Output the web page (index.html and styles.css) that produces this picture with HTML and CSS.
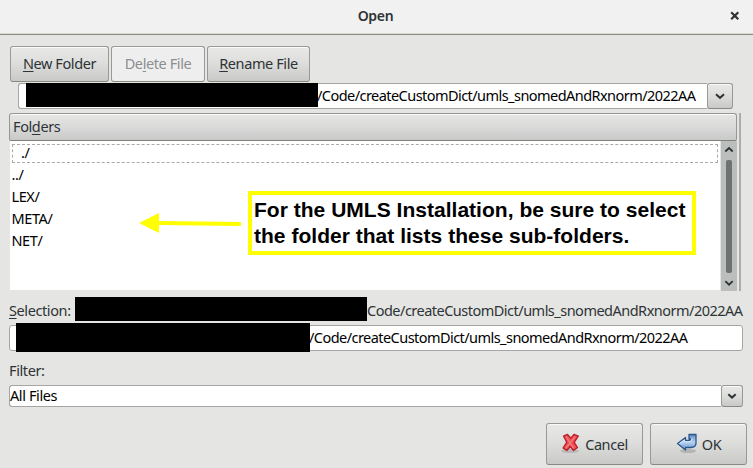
FILE: index.html
```html
<!DOCTYPE html>
<html lang="en">
<head>
<meta charset="utf-8">
<title>Open</title>
<link rel="stylesheet" href="styles.css">
</head>
<body>
<div class="dialog">
  <header class="titlebar">
    <h1>Open</h1>
    <svg class="close" width="10" height="10" viewBox="0 0 10 10"><path d="M1.2 1.2 8.3 8.3M8.3 1.2 1.2 8.3" stroke="#2e3436" stroke-width="2.2"/></svg>
  </header>
  <main>
    <div class="toolbar">
      <button class="btn new"><span><u>N</u>ew Folder</span></button>
      <button class="btn delete" disabled><span>De<u>l</u>ete File</span></button>
      <button class="btn rename"><span><u>R</u>ename File</span></button>
    </div>
    <div class="path combo">
      <div class="field"><span class="redacted"></span><span class="value">/Code/createCustomDict/umls_snomedAndRxnorm/2022AA</span></div>
      <button class="btn drop"><svg width="10" height="7" viewBox="0 0 10 7"><path d="M1 1.2 5 4.8 9 1.2" fill="none" stroke="#2e3436" stroke-width="2"/></svg></button>
    </div>
    <section class="folders">
      <div class="list-side">
        <div class="list-head"><span>Fol<u>d</u>ers</span></div>
        <div class="list-body">
          <ul>
            <li class="current">./</li>
            <li>../</li>
            <li>LEX/</li>
            <li>META/</li>
            <li>NET/</li>
          </ul>
          <div class="scrollbar">
            <svg width="10" height="7" viewBox="0 0 10 7"><path d="M1.3 5.5 5 2 8.7 5.5" fill="none" stroke="#2e3436" stroke-width="1.8"/></svg>
            <i class="thumb"></i>
            <svg width="10" height="7" viewBox="0 0 10 7"><path d="M1.3 1.2 5 4.7 8.7 1.2" fill="none" stroke="#2e3436" stroke-width="1.8"/></svg>
          </div>
        </div>
      </div>
      <div class="callout">
        <svg width="102" height="20" viewBox="0 0 102 20"><path d="M0 10 20 0V8L102 9V13L20 12V20Z" fill="#ff0"/></svg>
        <p><span class="line1">For the UMLS Installation, be sure to select</span><br><span class="line2">the folder that lists these sub-folders.</span></p>
      </div>
    </section>
    <div class="selection"><span class="label"><u>S</u>election:</span><span class="redacted"></span><span class="value">Code/createCustomDict/umls_snomedAndRxnorm/2022AA</span></div>
    <div class="field entry"><span class="redacted"></span><span class="value">/Code/createCustomDict/umls_snomedAndRxnorm/2022AA</span></div>
    <div class="filter-label">Filter:</div>
    <div class="combo filter">
      <div class="field"><span>All Files</span></div>
      <button class="btn drop"><svg width="10" height="7" viewBox="0 0 10 7"><path d="M1.3 1.2 5 4.6 8.7 1.2" fill="none" stroke="#2e3436" stroke-width="2"/></svg></button>
    </div>
    <footer>
      <button class="btn cancel">
        <svg width="20" height="21" viewBox="0 0 20 21"><ellipse cx="9" cy="18" rx="9" ry="2" fill="#888" opacity=".35"/><path d="M2.5 3 6.5 1.3 9.8 5.2 13 1.3 17.3 3.2 13.2 9.3 16.5 14.5 12.5 17.5 9.3 13.5 5.8 17.5 2 15 5.7 9.3Z" fill="#ef4f55" stroke="#b51f2a" stroke-width="1.3" stroke-linejoin="round"/><path d="M5 3.6 12.7 15.3M14.2 3.6 5 15" stroke="#f77b7d" stroke-width="1.3"/></svg>
        <span>Cancel</span>
      </button>
      <button class="btn ok">
        <svg width="22" height="21" viewBox="0 0 22 21"><defs><linearGradient id="g" x2="0" y2="1"><stop stop-color="#5b8ac4"/><stop offset=".5" stop-color="#b7d2ee"/><stop offset="1" stop-color="#5e94d2"/></linearGradient></defs><ellipse cx="12" cy="18" rx="8" ry="2" fill="#777" opacity=".35"/><path d="M1.5 10.5 9.5 4.5V7.5H12.5Q15 7.5 15 6H13V1.5H20V10Q20 14.5 15 14.5H9.5V17Z" fill="url(#g)" stroke="#2d568b" stroke-width="1.3" stroke-linejoin="round"/><path d="M3.7 10.5 8.4 7V8.7H13Q16.2 8.5 16.2 5" fill="none" stroke="#dceafa"/></svg>
        <span>OK</span>
      </button>
    </footer>
  </main>
</div>
</body>
</html>
```
FILE: styles.css
```css
* { box-sizing: border-box; }
body {
  margin: 0;
  background: #e5e5e3;
  color: #2e3436;
  font: 14.5px/22px "Noto Sans", sans-serif;
  letter-spacing: -0.4px;
}
.dialog { width: 753px; height: 468px; overflow: hidden; }
.titlebar {
  position: relative;
  height: 35px;
  display: flex;
  align-items: center;
  justify-content: center;
  padding-bottom: 3px;
  background: #f1f1f1;
  border-bottom: 1px solid #8c8d82;
  box-shadow: inset 0 -1px #d8d9d3;
}
h1 { margin: 0 2px 0 0; font-size: 14px; line-height: 22px; font-weight: 600; letter-spacing: -.3px; }
.close { position: absolute; right: 13px; top: 11px; }
main { padding: 11px 6px 0 9px; }
u { text-decoration: underline; text-decoration-thickness: 1px; text-underline-offset: 2px; text-decoration-skip-ink: none; }
.btn {
  display: flex;
  flex: none;
  align-items: center;
  justify-content: center;
  padding: 0;
  font: inherit;
  letter-spacing: inherit;
  color: inherit;
  border: 1px solid #999a96;
  border-bottom-color: #878983;
  border-radius: 3px;
  background: linear-gradient(#e8e8e6, #dededd 45%, #c9c9c7);
  box-shadow: inset 0 1px #fafafa;
}
.btn span { white-space: nowrap; }
.toolbar { display: flex; gap: 2px; height: 36px; padding-left: 1px; }
.toolbar .btn { padding-bottom: 2px; }
.new { width: 99px; }
.delete { width: 94px; color: #8b8e8f; background: #eee; }
.rename { width: 103px; }
.combo { display: flex; }
.field {
  flex: 1;
  min-width: 0;
  display: flex;
  align-items: center;
  background: #fff;
  border: 1px solid #a5a6a2;
  border-radius: 3px;
  color: #000;
  white-space: nowrap;
}
.combo .field { border-right: 0; border-radius: 3px 0 0 3px; }
.redacted { flex: none; background: #000; }
.path { height: 26px; margin: 1px 14px 0 9px; }
.path .redacted { width: 292px; height: 24px; margin: -2px 0 0 7px; }
.path .drop { width: 26px; }
.value { margin-left: -1px; letter-spacing: -0.55px; }
.field span:last-child { padding-bottom: 2px; }
.folders {
  position: relative;
  width: 732px;
  height: 178px;
  margin-top: 4px;
  border-right: 2px solid #adaeab;
}
.list-side { width: 728px; }
.list-head {
  height: 28px;
  padding: 1px 3px;
  border: 1px solid #969793;
  border-bottom-color: #7f817d;
  border-radius: 3px 3px 2px 2px;
  background: linear-gradient(#e6e6e4, #dadada 50%, #c9c9c8);
  box-shadow: inset 0 1px #fafafa;
}
.list-body { display: flex; height: 150px; }
ul { flex: 1; height: 149px; margin: 0 1px 0 1px; padding: 1px 2px 1px 1.5px; list-style: none; background: #fff; color: #000; }
li { height: 22px; line-height: 20px; }
.current { height: 19px; line-height: 15px; margin: 2px 0 1px 0.5px; padding-left: 8px; border: 1px dashed #aaa; }
.scrollbar {
  width: 16px;
  display: flex;
  flex-direction: column;
  align-items: center;
  justify-content: space-between;
  padding: 5px 0 4px;
  background: #bcbebd;
}
.thumb { width: 6px; height: 113px; border-radius: 2px; background: #6e7272; }
.callout { position: absolute; left: 130px; top: 78px; display: flex; align-items: center; gap: 7px; }
.callout p {
  width: 448px;
  height: 64px;
  margin: 0;
  padding: 2px 2px;
  border: 4px solid #ff0;
  background: #fff;
  color: #000;
  font: bold 21px/26px "Liberation Sans", sans-serif;
  letter-spacing: 0.02px;
  white-space: nowrap;
}
.selection { display: flex; align-items: center; height: 24px; margin-top: 6px; white-space: nowrap; }
.selection .label { flex: none; width: 66px; padding-top: 2px; }
.selection .redacted { width: 292px; height: 24px; }
.selection .value { margin-left: 0; padding-top: 2px; letter-spacing: -0.51px; }
.entry { width: 734px; height: 26px; margin-top: 4px; }
.entry .redacted { width: 294px; height: 29px; margin: -2px 0 0 6px; }
.filter-label { height: 22px; margin-top: 8px; }
.filter { width: 734px; height: 22px; margin-top: 4px; }
.filter .drop { width: 22px; }
footer { display: flex; justify-content: flex-end; gap: 7px; margin-top: 16px; }
footer .btn { width: 97px; height: 42px; gap: 4px; padding-bottom: 1px; }
```
